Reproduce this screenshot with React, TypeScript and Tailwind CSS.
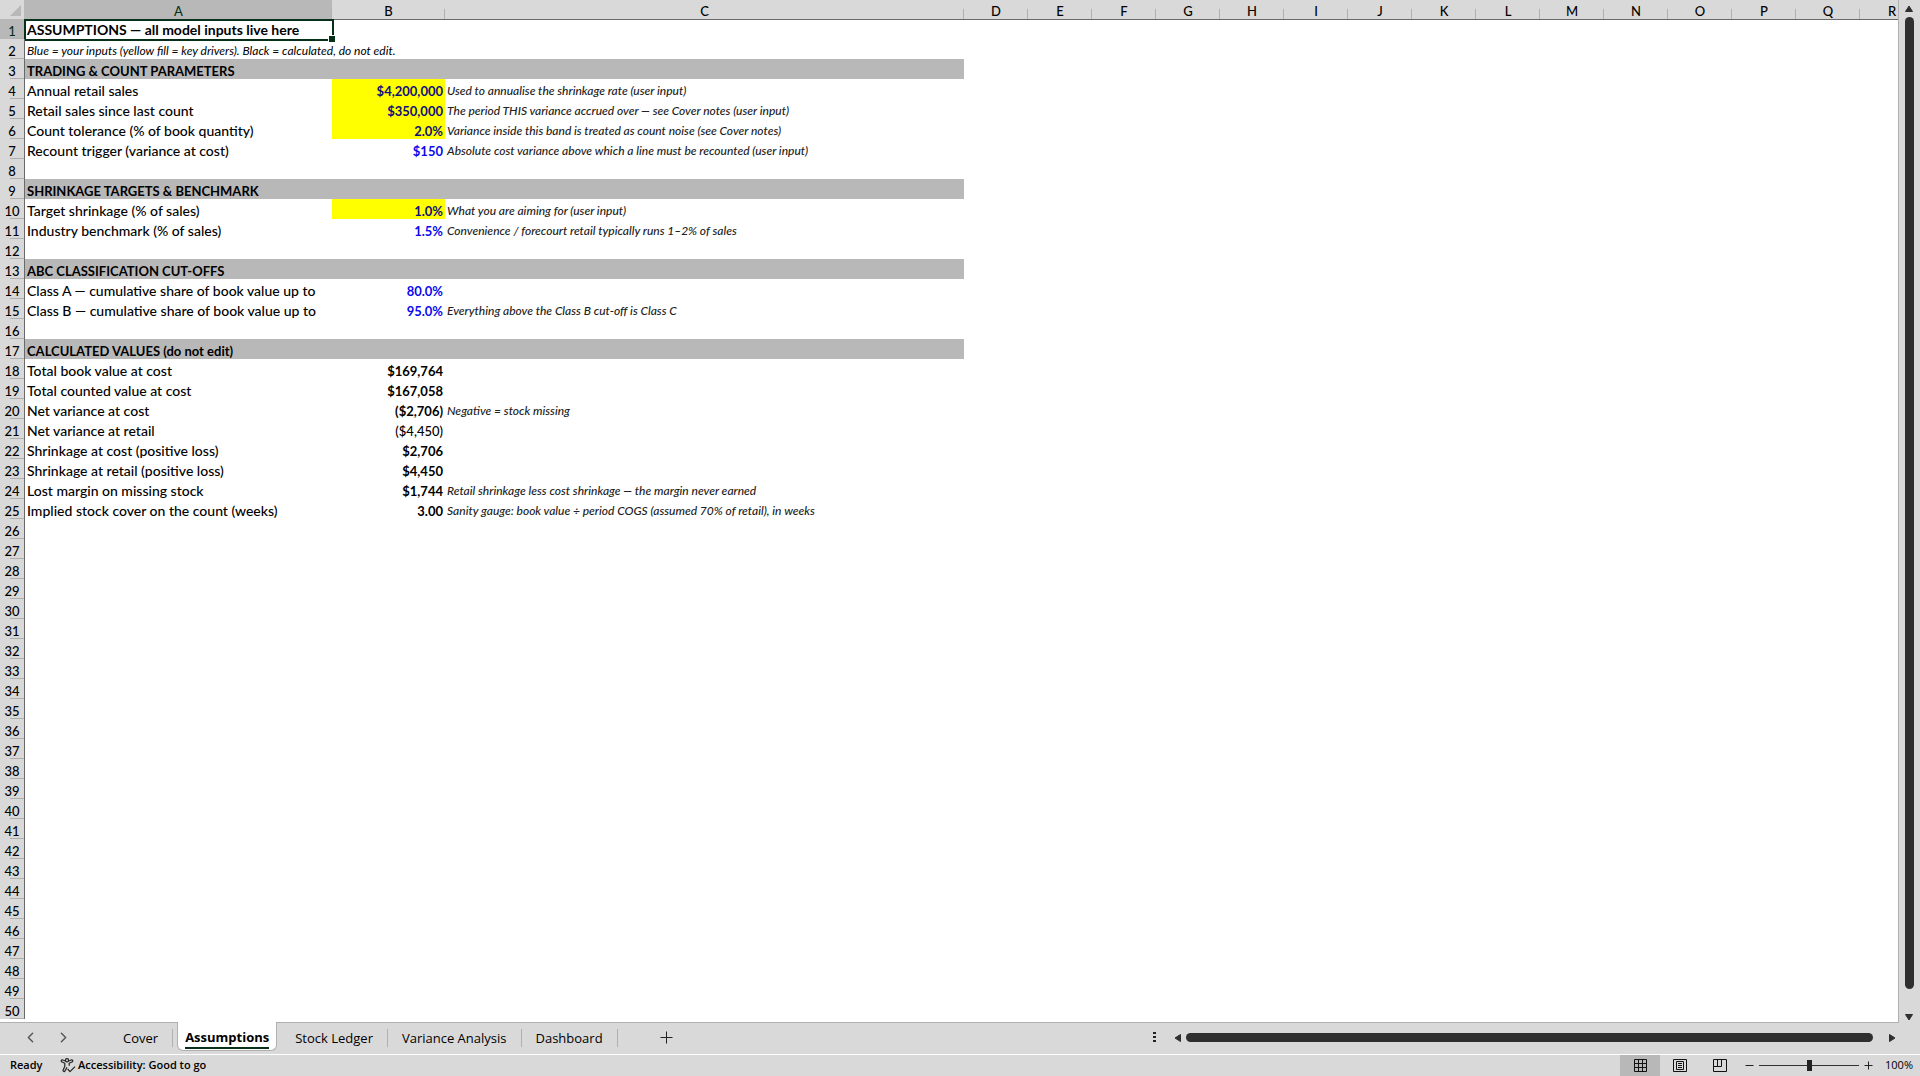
import { useState } from 'react';
import { ChevronLeft, ChevronRight } from 'lucide-react';

type Row = {
  label?: string;
  value?: string;
  note?: string;
  kind?: 'title' | 'subtitle' | 'section';
  tone?: 'driver' | 'input' | 'bold';
};

const rows: Row[] = [
  { label: 'ASSUMPTIONS — all model inputs live here', kind: 'title' },
  { label: 'Blue = your inputs (yellow fill = key drivers). Black = calculated, do not edit.', kind: 'subtitle' },
  { label: 'TRADING & COUNT PARAMETERS', kind: 'section' },
  { label: 'Annual retail sales', value: '$4,200,000', note: 'Used to annualise the shrinkage rate (user input)', tone: 'driver' },
  { label: 'Retail sales since last count', value: '$350,000', note: 'The period THIS variance accrued over — see Cover notes (user input)', tone: 'driver' },
  { label: 'Count tolerance (% of book quantity)', value: '2.0%', note: 'Variance inside this band is treated as count noise (see Cover notes)', tone: 'driver' },
  { label: 'Recount trigger (variance at cost)', value: '$150', note: 'Absolute cost variance above which a line must be recounted (user input)', tone: 'input' },
  {},
  { label: 'SHRINKAGE TARGETS & BENCHMARK', kind: 'section' },
  { label: 'Target shrinkage (% of sales)', value: '1.0%', note: 'What you are aiming for (user input)', tone: 'driver' },
  { label: 'Industry benchmark (% of sales)', value: '1.5%', note: 'Convenience / forecourt retail typically runs 1–2% of sales', tone: 'input' },
  {},
  { label: 'ABC CLASSIFICATION CUT-OFFS', kind: 'section' },
  { label: 'Class A — cumulative share of book value up to', value: '80.0%', tone: 'input' },
  { label: 'Class B — cumulative share of book value up to', value: '95.0%', note: 'Everything above the Class B cut-off is Class C', tone: 'input' },
  {},
  { label: 'CALCULATED VALUES (do not edit)', kind: 'section' },
  { label: 'Total book value at cost', value: '$169,764', tone: 'bold' },
  { label: 'Total counted value at cost', value: '$167,058', tone: 'bold' },
  { label: 'Net variance at cost', value: '($2,706)', note: 'Negative = stock missing', tone: 'bold' },
  { label: 'Net variance at retail', value: '($4,450)' },
  { label: 'Shrinkage at cost (positive loss)', value: '$2,706', tone: 'bold' },
  { label: 'Shrinkage at retail (positive loss)', value: '$4,450', tone: 'bold' },
  { label: 'Lost margin on missing stock', value: '$1,744', note: 'Retail shrinkage less cost shrinkage — the margin never earned', tone: 'bold' },
  { label: 'Implied stock cover on the count (weeks)', value: '3.00', note: 'Sanity gauge: book value ÷ period COGS (assumed 70% of retail), in weeks', tone: 'bold' },
];

const ROW_COUNT = 50;
const columns = 'ABCDEFGHIJKLMNOPQR'.split('');
const tabs = ['Cover', 'Assumptions', 'Stock Ledger', 'Variance Analysis', 'Dashboard'];

const labelStyles = {
  title: 'pt-px font-bold text-sm leading-4',
  subtitle: 'pt-1 italic text-xs leading-4',
  section: 'pt-1 font-bold text-[13px] leading-4 bg-[#b8b8b8]',
};

const valueStyles = {
  driver: 'bg-[#ffff00] text-[#10107a] font-bold',
  input: 'text-[#0a0af0] font-bold',
  bold: 'font-bold',
};

function Grid() {
  return (
    <table className="table-fixed w-[1924px] border-separate border-spacing-0 font-['Lato',sans-serif] text-[13px] leading-4 text-black">
      <colgroup>
        <col className="w-[25px]" />
        <col className="w-[307px]" />
        <col className="w-[113px]" />
        <col className="w-[519px]" />
        {columns.slice(3).map((c) => (
          <col key={c} className="w-16" />
        ))}
      </colgroup>
      <thead>
        <tr className="h-5">
          <th className="p-0 bg-[#d9d9d9] border-r border-b border-[#b8b8b8]" aria-label="Select all">
            <svg viewBox="0 0 24 19" className="block w-6 h-[19px]">
              <path d="M21 5v11H10z" fill="#b8b8b8" />
            </svg>
          </th>
          {columns.map((c) => (
            <th
              key={c}
              scope="col"
              className={`relative p-0 pt-0.5 font-medium border-b border-[#6a6a6a] ${c === 'A' ? 'bg-[#b8b8b8] text-[#06301a]' : 'bg-[#d9d9d9]'}`}
            >
              {c}
              <span className="absolute right-0 bottom-0 w-px h-2.5 bg-[#b0b0b0]" />
            </th>
          ))}
        </tr>
      </thead>
      <tbody>
        {Array.from({ length: ROW_COUNT }, (_, i) => {
          const row = rows[i] ?? {};
          return (
            <tr key={i} className={i === 0 ? 'h-[19px]' : 'h-5'}>
              <th
                scope="row"
                className={`relative p-0 font-medium border-r border-[#6a6a6a] ${i === 0 ? 'pt-0.5 bg-[#b8b8b8] text-[#06301a]' : 'pt-1 bg-[#d9d9d9]'}`}
              >
                {i + 1}
                <span className="absolute right-0 bottom-0 h-px w-3.5 bg-[#b0b0b0]" />
              </th>
              {row.kind ? (
                <td
                  colSpan={row.kind === 'title' ? 1 : 3}
                  className={`relative pr-0 pb-0 pl-0.5 whitespace-nowrap ${labelStyles[row.kind]}`}
                >
                  {row.label}
                  {row.kind === 'title' && (
                    <span className="absolute -left-px -right-0.5 -top-px -bottom-0.5 border-2 border-[#06301a]">
                      <span className="absolute -right-[3px] -bottom-[3px] size-1.5 bg-[#06301a] outline outline-white" />
                    </span>
                  )}
                </td>
              ) : (
                <>
                  <td className="p-0 pt-1 pl-0.5 font-medium text-sm leading-4 whitespace-nowrap">{row.label}</td>
                  <td className={`p-0 pt-1 pr-0.5 text-right whitespace-nowrap ${row.tone ? valueStyles[row.tone] : 'font-medium'}`}>
                    {row.value}
                  </td>
                  <td className="p-0 pt-1 pl-0.5 italic text-xs leading-4 font-medium text-[#222] whitespace-nowrap">{row.note}</td>
                </>
              )}
            </tr>
          );
        })}
      </tbody>
    </table>
  );
}

function VerticalScroll() {
  return (
    <div className="w-[21px] shrink-0 flex flex-col items-center pt-[5px] pb-0.5 pr-px">
      <button aria-label="Scroll up">
        <svg viewBox="0 0 10 8" className="block w-2.5 h-2">
          <path d="M5 1 8.5 6.5h-7z" fill="#2f2f2f" stroke="#2f2f2f" strokeLinejoin="round" />
        </svg>
      </button>
      <div className="mt-1 mb-6 flex-1 w-[9px] rounded-full bg-[#2f2f2f]" />
      <button aria-label="Scroll down">
        <svg viewBox="0 0 10 8" className="block w-2.5 h-2">
          <path d="M5 7 8.5 1.5h-7z" fill="#2f2f2f" stroke="#2f2f2f" strokeLinejoin="round" />
        </svg>
      </button>
    </div>
  );
}

function SheetTabs() {
  const [active, setActive] = useState('Assumptions');

  return (
    <div className="h-[31px] shrink-0 flex text-[13px] text-black">
      <div className="w-[109px] flex items-center pl-[22px] gap-4 pb-0.5 text-[#555]">
        <button aria-label="Previous sheet">
          <ChevronLeft size={17} strokeWidth={2} />
        </button>
        <button aria-label="Next sheet">
          <ChevronRight size={17} strokeWidth={2} />
        </button>
      </div>
      <div className="flex items-start">
        {tabs.map((tab) =>
          tab === active ? (
            <button key={tab} className="-mt-px mx-1 h-[29px] px-[7px] pt-0.5 bg-white border border-t-0 border-[#b0b0b0] rounded-b-md font-bold">
              <span className="block h-[23px] leading-[23px] border-b-2 border-[#06301a]">{tab}</span>
            </button>
          ) : (
            <button
              key={tab}
              onClick={() => setActive(tab)}
              className="mt-[6px] h-[18px] px-3.5 leading-[18px] font-medium border-r border-[#b0b0b0]"
            >
              {tab}
            </button>
          ),
        )}
      </div>
      <button aria-label="New sheet" className="ml-[42px] mb-0.5 self-center">
        <svg viewBox="0 0 13 13" className="block size-[13px]">
          <path d="M6.5 0.5v12M0.5 6.5h12" stroke="#222" fill="none" />
        </svg>
      </button>
      <div className="flex-1" />
      <div className="w-[767px] flex items-center pb-[2px]">
        <svg viewBox="0 0 3 11" className="w-[3px] h-[11px] mr-[18px]">
          <path d="M0 0h3v2H0zM0 4h3v2H0zM0 8h3v2H0z" fill="#222" />
        </svg>
        <button aria-label="Scroll left">
          <svg viewBox="0 0 8 10" className="block w-2 h-2.5">
            <path d="M1 5 6.5 1.5v7z" fill="#2f2f2f" stroke="#2f2f2f" strokeLinejoin="round" />
          </svg>
        </button>
        <div className="ml-1 mr-[15px] flex-1 h-[9px] rounded-full bg-[#2f2f2f]" />
        <button aria-label="Scroll right" className="mr-6">
          <svg viewBox="0 0 8 10" className="block w-2 h-2.5">
            <path d="M7 5 1.5 1.5v7z" fill="#2f2f2f" stroke="#2f2f2f" strokeLinejoin="round" />
          </svg>
        </button>
      </div>
    </div>
  );
}

function StatusBar() {
  const [zoom, setZoom] = useState(100);

  return (
    <footer className="h-[22px] shrink-0 flex items-center border-t border-white text-[11px] font-medium text-black">
      <span className="w-[50px] pl-2.5 font-semibold">Ready</span>
      <button className="pl-2.5 flex items-center gap-0.5 font-semibold">
        <svg viewBox="0 0 16 15" className="w-4 h-[15px]" fill="none" stroke="#222" strokeWidth="1.2" strokeLinejoin="round">
          <circle cx="7" cy="2.2" r="1.6" />
          <path d="M5.4 3 2.2 1.8Q0.5 2.4 1.6 3.8L4.8 5.2v3L3 12.6q.6 1.6 1.8.6L7 9.4M8.6 3l3.2-1.2q1.7.6.6 2L9.2 5.2v2.6" />
          <path d="m7.6 11 2.4 2.6L15 8.6" />
        </svg>
        Accessibility: Good to go
      </button>
      <div className="flex-1" />
      <button aria-label="Normal view" className="w-10 h-[21px] flex items-center justify-center bg-[#b8b8b8]">
        <svg viewBox="0 0 13 13" className="size-[13px]" fill="none" stroke="#111">
          <path d="M.5.5h12v12H.5zM4.5.5v12M8.5.5v12M.5 4.5h12M.5 8.5h12" />
        </svg>
      </button>
      <button aria-label="Page layout view" className="w-10 h-[21px] flex items-center justify-center">
        <svg viewBox="0 0 14 13" className="w-3.5 h-[13px]" fill="none" stroke="#111">
          <path d="M.5.5h13v12H.5zM3.5 2.5h7v8h-7zM5 4.5h4M5 6.5h4M5 8.5h4" />
        </svg>
      </button>
      <button aria-label="Page break preview" className="w-10 h-[21px] flex items-center justify-center">
        <svg viewBox="0 0 14 13" className="w-3.5 h-[13px]" fill="none" stroke="#111">
          <path d="M.5.5h13v12H.5zM.5 7.5h8v-7M4.5.5v7" />
        </svg>
      </button>
      <button aria-label="Zoom out" className="ml-[5px]" onClick={() => setZoom(Math.max(10, zoom - 10))}>
        <svg viewBox="0 0 9 9" className="block size-[9px]">
          <path d="M.5 4.5h8" stroke="#222" />
        </svg>
      </button>
      <input
        type="range"
        aria-label="Zoom"
        min={10}
        max={190}
        value={zoom}
        onChange={(e) => setZoom(Number(e.target.value))}
        className="mx-[5px] w-[100px] h-[11px] appearance-none bg-linear-to-r from-[#333] to-[#333] bg-[length:100%_1px] bg-center bg-no-repeat [&::-webkit-slider-thumb]:appearance-none [&::-webkit-slider-thumb]:w-[5px] [&::-webkit-slider-thumb]:h-[11px] [&::-webkit-slider-thumb]:bg-[#222]"
      />
      <button aria-label="Zoom in" onClick={() => setZoom(Math.min(190, zoom + 10))}>
        <svg viewBox="0 0 9 9" className="block size-[9px]">
          <path d="M.5 4.5h8M4.5.5v8" stroke="#222" />
        </svg>
      </button>
      <span className="w-[47px] pr-[7px] text-right">{zoom}%</span>
    </footer>
  );
}

export default function App() {
  return (
    <div className="h-screen flex flex-col overflow-hidden bg-[#d9d9d9] font-['Open_Sans',sans-serif]">
      <div className="flex-1 min-h-0 flex">
        <main className="flex-1 min-w-0 overflow-hidden bg-white border-r border-b border-[#b0b0b0]">
          <Grid />
        </main>
        <VerticalScroll />
      </div>
      <SheetTabs />
      <StatusBar />
    </div>
  );
}
